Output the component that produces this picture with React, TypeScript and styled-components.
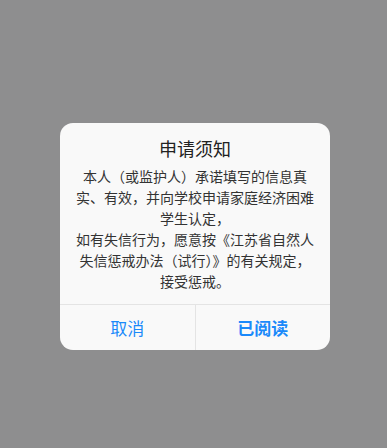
import React, { FC } from 'react'
import styled, { createGlobalStyle } from 'styled-components'

const GlobalStyle = createGlobalStyle`
	html, body {
		margin: 0;
		padding: 0;
		height: 100%;
	}
	body {
		font-family: "Noto Sans CJK SC", "Noto Sans", sans-serif;
	}
	#root {
		height: 100%;
	}
`

const Overlay = styled.div`
	box-sizing: border-box;
	height: 100%;
	min-height: 448px;
	background: #8e8e8f;
	padding: 123px 0 0 60px;
`

const Dialog = styled.div`
	width: 270px;
	background: #f9f9f9;
	border-radius: 13px;
	overflow: hidden;
`

const Content = styled.div`
	padding: 12px 15px 12px;
	text-align: center;
`

const Title = styled.div`
	font-size: 18px;
	line-height: 26px;
	color: #222;
	margin-bottom: 5px;
`

const Body = styled.div`
	font-size: 14px;
	line-height: 21px;
	color: #333;
`

const Actions = styled.div`
	display: flex;
	border-top: 1px solid #e4e4e4;
`

const ActionButton = styled.button<{ $primary?: boolean }>`
	flex: 1;
	height: 45px;
	border: none;
	background: transparent;
	font-family: inherit;
	font-size: 17px;
	font-weight: ${p => (p.$primary ? 700 : 400)};
	color: #1a89fa;
	padding: 0;

	& + & {
		border-left: 1px solid #e4e4e4;
	}
`

const App: FC = () => {
	return (
		<>
			<GlobalStyle />
			<Overlay>
				<Dialog>
					<Content>
						<Title>申请须知</Title>
						<Body>
							本人（或监护人）承诺填写的信息真实、有效，并向学校申请家庭经济困难学生认定，
							<br />
							如有失信行为，愿意按《江苏省自然人失信惩戒办法（试行）》的有关规定，接受惩戒。
						</Body>
					</Content>
					<Actions>
						<ActionButton>取消</ActionButton>
						<ActionButton $primary>已阅读</ActionButton>
					</Actions>
				</Dialog>
			</Overlay>
		</>
	)
}

export default App
